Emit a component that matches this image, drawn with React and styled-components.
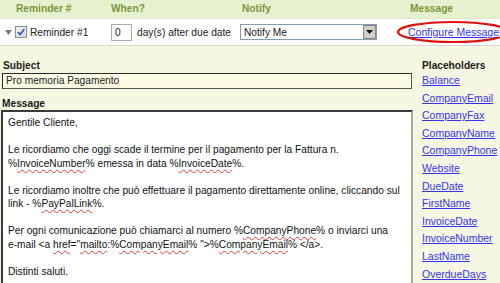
import React from 'react';
import styled, { createGlobalStyle } from 'styled-components';

const Global = createGlobalStyle`
  html, body { margin: 0; padding: 0; overflow: hidden; }
  body {
    background: #f6f7e3;
    font-family: "Liberation Sans", Arial, sans-serif;
    font-size: 10.2px;
    color: #222;
  }
`;

const COLS = '110px 130px 168px 1fr';

const Page = styled.div`
  width: 500px;
  height: 283px;
  overflow: hidden;
`;

const HeaderBar = styled.div`
  display: grid;
  grid-template-columns: ${COLS};
  height: 18px;
  line-height: 18px;
  background: #e6f2cf;
  border-bottom: 1px solid #dde8c8;
`;

const HeaderCell = styled.div`
  font-weight: bold;
  color: #7a963a;
  padding-left: ${p => p.$pad || 0}px;
`;

const ReminderRow = styled.div`
  display: grid;
  grid-template-columns: ${COLS};
  align-items: center;
  height: 26px;
  background: #ffffff;
  border-bottom: 1px solid #d6dac6;
`;

const Cell = styled.div`
  display: flex;
  align-items: center;
  gap: ${p => p.$gap || 0}px;
  padding-left: ${p => p.$pad || 0}px;
  position: relative;
  white-space: nowrap;
`;

const Toggle = styled.svg`
  width: 7px;
  height: 5px;
  display: block;
`;

const Check = styled.svg`
  width: 12px;
  height: 12px;
  display: block;
`;

const PlainText = styled.span`
  color: #222;
`;

const DaysInput = styled.div`
  box-sizing: border-box;
  width: 21px;
  height: 17px;
  margin-left: 1px;
  border: 1px solid #a5acb2;
  background: #fff;
  padding-left: 3px;
  line-height: 15px;
`;

const Select = styled.div`
  box-sizing: border-box;
  width: 137px;
  height: 16px;
  border: 1px solid #7f9db9;
  background: #fff;
  display: flex;
  align-items: center;
  justify-content: space-between;
  padding-left: 3px;
`;

const SelectButton = styled.span`
  box-sizing: border-box;
  width: 13px;
  height: 14px;
  background: #d4d0c8;
  border: 1px solid #888;
  display: flex;
  align-items: center;
  justify-content: center;
`;

const Link = styled.a`
  color: #3434f0;
  text-decoration: underline;
  font-size: 10.5px;
  cursor: pointer;
`;

const Ellipse = styled.svg`
  position: absolute;
  left: -12px;
  top: -6px;
  width: 120px;
  height: 24px;
  overflow: visible;
  pointer-events: none;
`;

const Main = styled.div`
  display: grid;
  grid-template-columns: 413px 1fr;
  padding-top: 13px;
`;

const Editor = styled.div`
  display: flex;
  flex-direction: column;
`;

const Label = styled.div`
  font-weight: bold;
  color: #1a1a1a;
  line-height: 13px;
  padding-left: ${p => p.$pad || 0}px;
`;

const SubjectInput = styled.div`
  box-sizing: border-box;
  margin: 1px 1px 8px 2px;
  height: 16px;
  border: 1px solid #2a2a2a;
  border-right-color: #555;
  border-bottom-color: #555;
  background: #fbfbe6;
  padding-left: 3px;
  line-height: 14px;
`;

const MessageBox = styled.div`
  box-sizing: border-box;
  margin-left: 1px;
  height: 190px;
  background: #fff;
  border-top: 2px solid #3a3a3a;
  border-left: 2px solid #3a3a3a;
  border-right: 2px solid #a8a8a8;
  padding: 4px 5px;
  overflow: hidden;
  color: #111;
`;

const Line = styled.div`
  min-height: 13.5px;
  line-height: 13.5px;
  white-space: nowrap;
`;

const Misspelled = styled.span`
  text-decoration: underline wavy #e23b3b;
  text-decoration-thickness: 1px;
  text-underline-offset: 2px;
`;

const Sidebar = styled.div`
  display: flex;
  flex-direction: column;
  padding-left: 9px;
`;

const PlaceholderLink = styled(Link)`
  display: block;
  line-height: 17.6px;
`;

const placeholders = [
  'Balance', 'CompanyEmail', 'CompanyFax', 'CompanyName', 'CompanyPhone',
  'Website', 'DueDate', 'FirstName', 'InvoiceDate', 'InvoiceNumber',
  'LastName', 'OverdueDays'
];

const lines = [
  ['Gentile Cliente,'],
  [],
  ['Le ricordiamo che oggi scade il termine per il pagamento per la Fattura n.'],
  ['%', { m: 'InvoiceNumber' }, '% emessa in data %', { m: 'InvoiceDate' }, '%.'],
  [],
  ['Le ricordiamo inoltre che può effettuare il pagamento direttamente online, cliccando sul'],
  ['link - %', { m: 'PayPalLink' }, '%.'],
  [],
  ['Per ogni comunicazione può chiamarci al numero %', { m: 'CompanyPhone' }, '% o inviarci una'],
  ['e-mail <a ', { m: 'href' }, '="', { m: 'mailto' }, ':%', { m: 'CompanyEmail' }, '% ">%', { m: 'CompanyEmail' }, '% </a>.'],
  [],
  ['Distinti saluti.'],
];

export default function App() {
  return (
    <Page>
      <Global />
      <HeaderBar>
        <HeaderCell $pad={16}>Reminder #</HeaderCell>
        <HeaderCell $pad={1}>When?</HeaderCell>
        <HeaderCell $pad={2}>Notify</HeaderCell>
        <HeaderCell $pad={2}>Message</HeaderCell>
      </HeaderBar>
      <ReminderRow>
        <Cell $pad={5} $gap={3}>
          <Toggle viewBox="0 0 7 5"><polygon points="0,0 7,0 3.5,5" fill="#7a7a7a" /></Toggle>
          <Check viewBox="0 0 12 12">
            <defs>
              <linearGradient id="cb" x1="0" y1="0" x2="1" y2="1">
                <stop offset="0" stopColor="#f4f4f4" />
                <stop offset="1" stopColor="#d8d8d8" />
              </linearGradient>
            </defs>
            <rect x="0.5" y="0.5" width="11" height="11" fill="url(#cb)" stroke="#8c8c8c" />
            <path d="M3 6.2 L5 8.4 L9.2 3.2" fill="none" stroke="#2b55c8" strokeWidth="1.6" />
          </Check>
          <PlainText>Reminder #1</PlainText>
        </Cell>
        <Cell $gap={5}>
          <DaysInput>0</DaysInput>
          <PlainText>day(s) after due date</PlainText>
        </Cell>
        <Cell>
          <Select>
            <span>Notify Me</span>
            <SelectButton>
              <svg width="7" height="4" viewBox="0 0 7 4"><polygon points="0,0 7,0 3.5,4" fill="#111" /></svg>
            </SelectButton>
          </Select>
        </Cell>
        <Cell>
          <Link>Configure Message</Link>
          <Ellipse viewBox="0 0 120 24">
            <ellipse cx="57" cy="12" rx="55" ry="10" fill="none" stroke="#e01010" strokeWidth="2.2" />
          </Ellipse>
        </Cell>
      </ReminderRow>
      <Main>
        <Editor>
          <Label $pad={3}>Subject</Label>
          <SubjectInput>Pro memoria Pagamento</SubjectInput>
          <Label $pad={2}>Message</Label>
          <MessageBox>
            {lines.map((segs, i) => (
              <Line key={i}>
                {segs.map((s, j) =>
                  typeof s === 'string' ? <React.Fragment key={j}>{s}</React.Fragment> : <Misspelled key={j}>{s.m}</Misspelled>
                )}
              </Line>
            ))}
          </MessageBox>
        </Editor>
        <Sidebar>
          <Label>Placeholders</Label>
          {placeholders.map(p => <PlaceholderLink key={p}>{p}</PlaceholderLink>)}
        </Sidebar>
      </Main>
    </Page>
  );
}
